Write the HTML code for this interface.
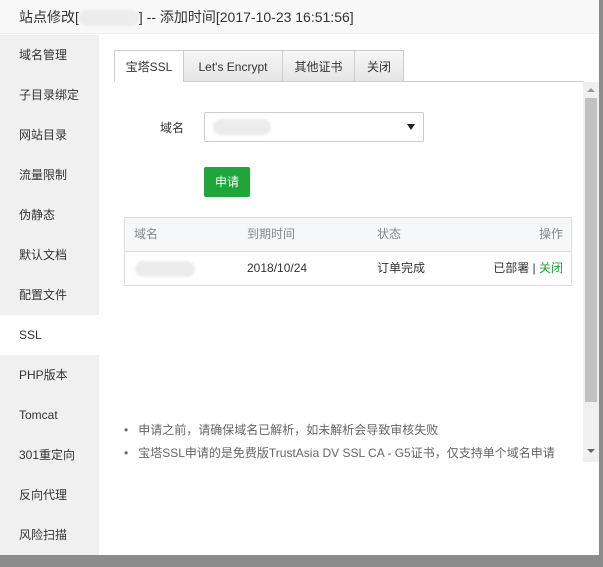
<!DOCTYPE html>
<html><head><meta charset="utf-8"><style>
*{margin:0;padding:0;box-sizing:border-box}
body{width:603px;height:567px;background:#8c8c8c;font-family:"Liberation Sans","Noto Sans CJK SC",sans-serif;font-size:12px;color:#333;position:relative;overflow:hidden}
.dlg{position:absolute;left:0;top:0;width:599px;height:555px;background:#fff}
.hd{position:absolute;left:0;top:0;width:599px;height:34px;background:#f8f8f8;border-bottom:1px solid #eee;font-size:14px;line-height:34px;padding-left:19px;color:#333}
.blur{display:inline-block;width:60px;height:16px;background:#ececec;border-radius:8px;vertical-align:middle;filter:blur(1px)}
.side{position:absolute;left:0;top:35px;width:99px;height:520px;background:#f0f0f0}
.side div{height:40px;line-height:40px;padding-left:19px;font-size:12px;color:#333}
.side .on{background:#fff}
.tabs{position:absolute;left:114px;top:50px;height:32px;display:flex}
.tabs div{height:32px;line-height:32px;border:1px solid #ccc;border-left:none;background:linear-gradient(#f6f6f6,#e6e6e6);font-size:12px;color:#333;padding:0;text-align:center}
.tabs div:first-child{border-left:1px solid #ccc;background:#fff;border-bottom-color:#fff;width:70px}
.tabs div:nth-child(2){width:99px}
.tabs div:nth-child(3){width:72px}
.tabs div:nth-child(4){width:49px}
.tline{position:absolute;left:183px;top:81px;width:401px;height:1px;background:#ccc}
.sb{position:absolute;left:583px;top:82px;width:16px;height:380px;background:#f0f0f0}
.thumb{position:absolute;left:585px;top:98px;width:12px;height:304px;background:#c1c1c1}
.lbl{position:absolute;left:160px;top:119px;font-size:12px}
.sel{position:absolute;left:204px;top:112px;width:220px;height:30px;border:1px solid #ccc;border-radius:2px}
.btn{position:absolute;left:204px;top:167px;width:46px;height:30px;background:#20a53a;border-radius:2px;color:#fff;text-align:center;line-height:30px;font-size:12px}
.tbl{position:absolute;left:124px;top:217px;width:448px;height:69px;border:1px solid #ddd}
.th{height:34px;background:#f6f7f9;border-bottom:1px solid #ddd;position:relative;color:#888}
.tr{height:33px;position:relative}
.th span,.tr span{position:absolute;top:0;line-height:33px}
.notes{position:absolute;left:124px;top:421px;color:#666;font-size:12px}
.notes div{height:23px;line-height:18px}
</style></head><body>
<div class="dlg">
<div class="hd">站点修改[<span class="blur"></span>] -- 添加时间[2017-10-23 16:51:56]</div>
<div class="side">
<div>域名管理</div><div>子目录绑定</div><div>网站目录</div><div>流量限制</div><div>伪静态</div><div>默认文档</div><div>配置文件</div><div class="on">SSL</div><div>PHP版本</div><div>Tomcat</div><div>301重定向</div><div>反向代理</div><div>风险扫描</div>
</div>
<div class="tabs"><div>宝塔SSL</div><div>Let's Encrypt</div><div>其他证书</div><div>关闭</div></div>
<div class="tline"></div>
<div class="sb"><div style="position:absolute;left:4px;top:6px;border:4px solid transparent;border-bottom-color:#999;border-top:none"></div><div style="position:absolute;left:4px;top:367px;border:4px solid transparent;border-top-color:#666;border-bottom:none"></div></div>
<div class="thumb"></div>
<div class="lbl">域名</div>
<div class="sel"><span class="blur" style="position:absolute;left:8px;top:6px;width:58px"></span><span style="position:absolute;right:8px;top:11px;width:0;height:0;border:4px solid transparent;border-top:6px solid #222;border-bottom:none"></span></div>
<div class="btn">申请</div>
<div class="tbl">
<div class="th"><span style="left:9px">域名</span><span style="left:122px">到期时间</span><span style="left:252px">状态</span><span style="right:8px">操作</span></div>
<div class="tr"><span class="blur" style="left:10px;top:9px;width:60px;position:absolute"></span><span style="left:122px">2018/10/24</span><span style="left:252px">订单完成</span><span style="right:8px">已部署 | <span style="position:static;color:#20a53a">关闭</span></span></div>
</div>
<div class="notes"><div>•&nbsp;&nbsp; 申请之前，请确保域名已解析，如未解析会导致审核失败</div><div>•&nbsp;&nbsp; 宝塔SSL申请的是免费版TrustAsia DV SSL CA - G5证书，仅支持单个域名申请</div></div>
</div>
</body></html>
